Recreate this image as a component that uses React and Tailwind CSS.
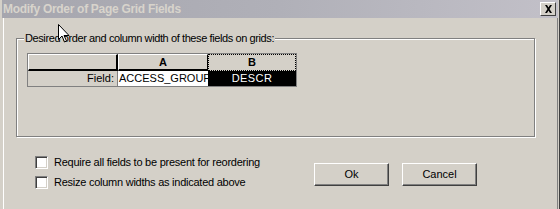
import React from 'react';

const font = { fontFamily: '"Liberation Sans", Arial, sans-serif' };

const Check = ({ label }) => (
  <label className="flex items-center h-[13px] text-[11px] text-black tracking-[-0.25px]">
    <span className="w-[13px] h-[13px] bg-white border-t border-l border-t-[#808080] border-l-[#808080] border-b border-r border-b-white border-r-white shadow-[inset_1px_1px_0_#404040,inset_-1px_-1px_0_#d4d0c8]" />
    <span className="ml-[6px]">{label}</span>
  </label>
);

const Btn = ({ children }) => (
  <button className="w-[75px] h-[23px] bg-[#d4d0c8] text-[11px] text-black border border-t-white border-l-white border-b-[#404040] border-r-[#404040] shadow-[inset_-1px_-1px_0_#808080] flex items-center justify-center">
    {children}
  </button>
);

export default function App() {
  return (
    <div className="relative w-[560px] h-[209px] overflow-hidden bg-[#d4d0c8] border-l-2 border-l-[#d4d0c8] border-r border-r-[#404040]" style={font}>
      <div className="absolute left-[1px] top-[18px] bottom-0 w-px bg-white" />
      <div className="absolute right-[1px] top-[18px] bottom-0 w-px bg-[#808080]" />

      {/* title bar */}
      <div className="-ml-[2px] mr-[1px] h-[18px] flex items-center justify-between pl-[3px] pr-[2px] bg-gradient-to-r from-[#a6a6ae] via-[#b0b0b8] to-[#c2c0c8]">
        <span className="text-[12px] font-bold text-[#d8d4cc] tracking-[-0.3px]">Modify Order of Page Grid Fields</span>
        <span className="w-[16px] h-[14px] bg-[#d4d0c8] border border-t-white border-l-white border-b-[#404040] border-r-[#404040] flex items-center justify-center">
          <svg width="9" height="8" viewBox="0 0 9 8">
            <path d="M1 0h2l1.5 2.5L6 0h2L5.5 4 8 8H6L4.5 5.5 3 8H1l2.5-4z" fill="#000" />
          </svg>
        </span>
      </div>

      {/* group box */}
      <fieldset className="ml-[14px] mt-[14px] w-[519px] h-[105px] border border-[#808080] shadow-[1px_1px_0_#ffffff,inset_1px_1px_0_#ffffff] pl-[10px]">
        <legend className="-ml-[3px] px-[1px] text-[11px] text-black bg-[#d4d0c8] leading-[12px] tracking-[-0.4px]">
          Desired order and column width of these fields on grids:
        </legend>
        <div className="mt-[9px] w-[270px] border border-[#808080] text-[11px]">
          <div className="flex h-[17px]">
            <div className="w-[90px] border-t border-l border-white border-b-2 border-r-2 border-b-black border-r-black" />
            <div className="w-[90px] border-t border-l border-white border-b-2 border-r border-b-black border-r-black flex items-center justify-center font-bold text-black">A</div>
            <div className="w-[88px] border border-dotted border-black flex items-center justify-center font-bold text-black">B</div>
          </div>
          <div className="flex h-[15px] leading-[15px]">
            <div className="w-[90px] border-r border-[#808080] text-right pr-[3px] text-black">Field:</div>
            <div className="w-[90px] bg-white text-black pl-[1px] whitespace-nowrap">ACCESS_GROUP</div>
            <div className="w-[88px] bg-black text-white text-center tracking-[0.4px]">DESCR</div>
          </div>
        </div>
      </fieldset>

      {/* bottom */}
      <div className="flex items-center mt-[19px]">
        <div className="flex flex-col gap-[7px] ml-[33px] w-[277px]">
          <Check label="Require all fields to be present for reordering" />
          <Check label="Resize column widths as indicated above" />
        </div>
        <div className="flex gap-[13px] ml-[2px] mt-[3px]">
          <Btn>Ok</Btn>
          <Btn>Cancel</Btn>
        </div>
      </div>

      {/* mouse cursor */}
      <svg className="absolute left-[56px] top-[24px]" width="12" height="20" viewBox="0 0 12 20">
        <path d="M0.5 0.5v15l3.5-3.5 2.5 6 2-1-2.5-5.5h5z" fill="#fff" stroke="#000" strokeWidth="1" />
      </svg>
    </div>
  );
}
